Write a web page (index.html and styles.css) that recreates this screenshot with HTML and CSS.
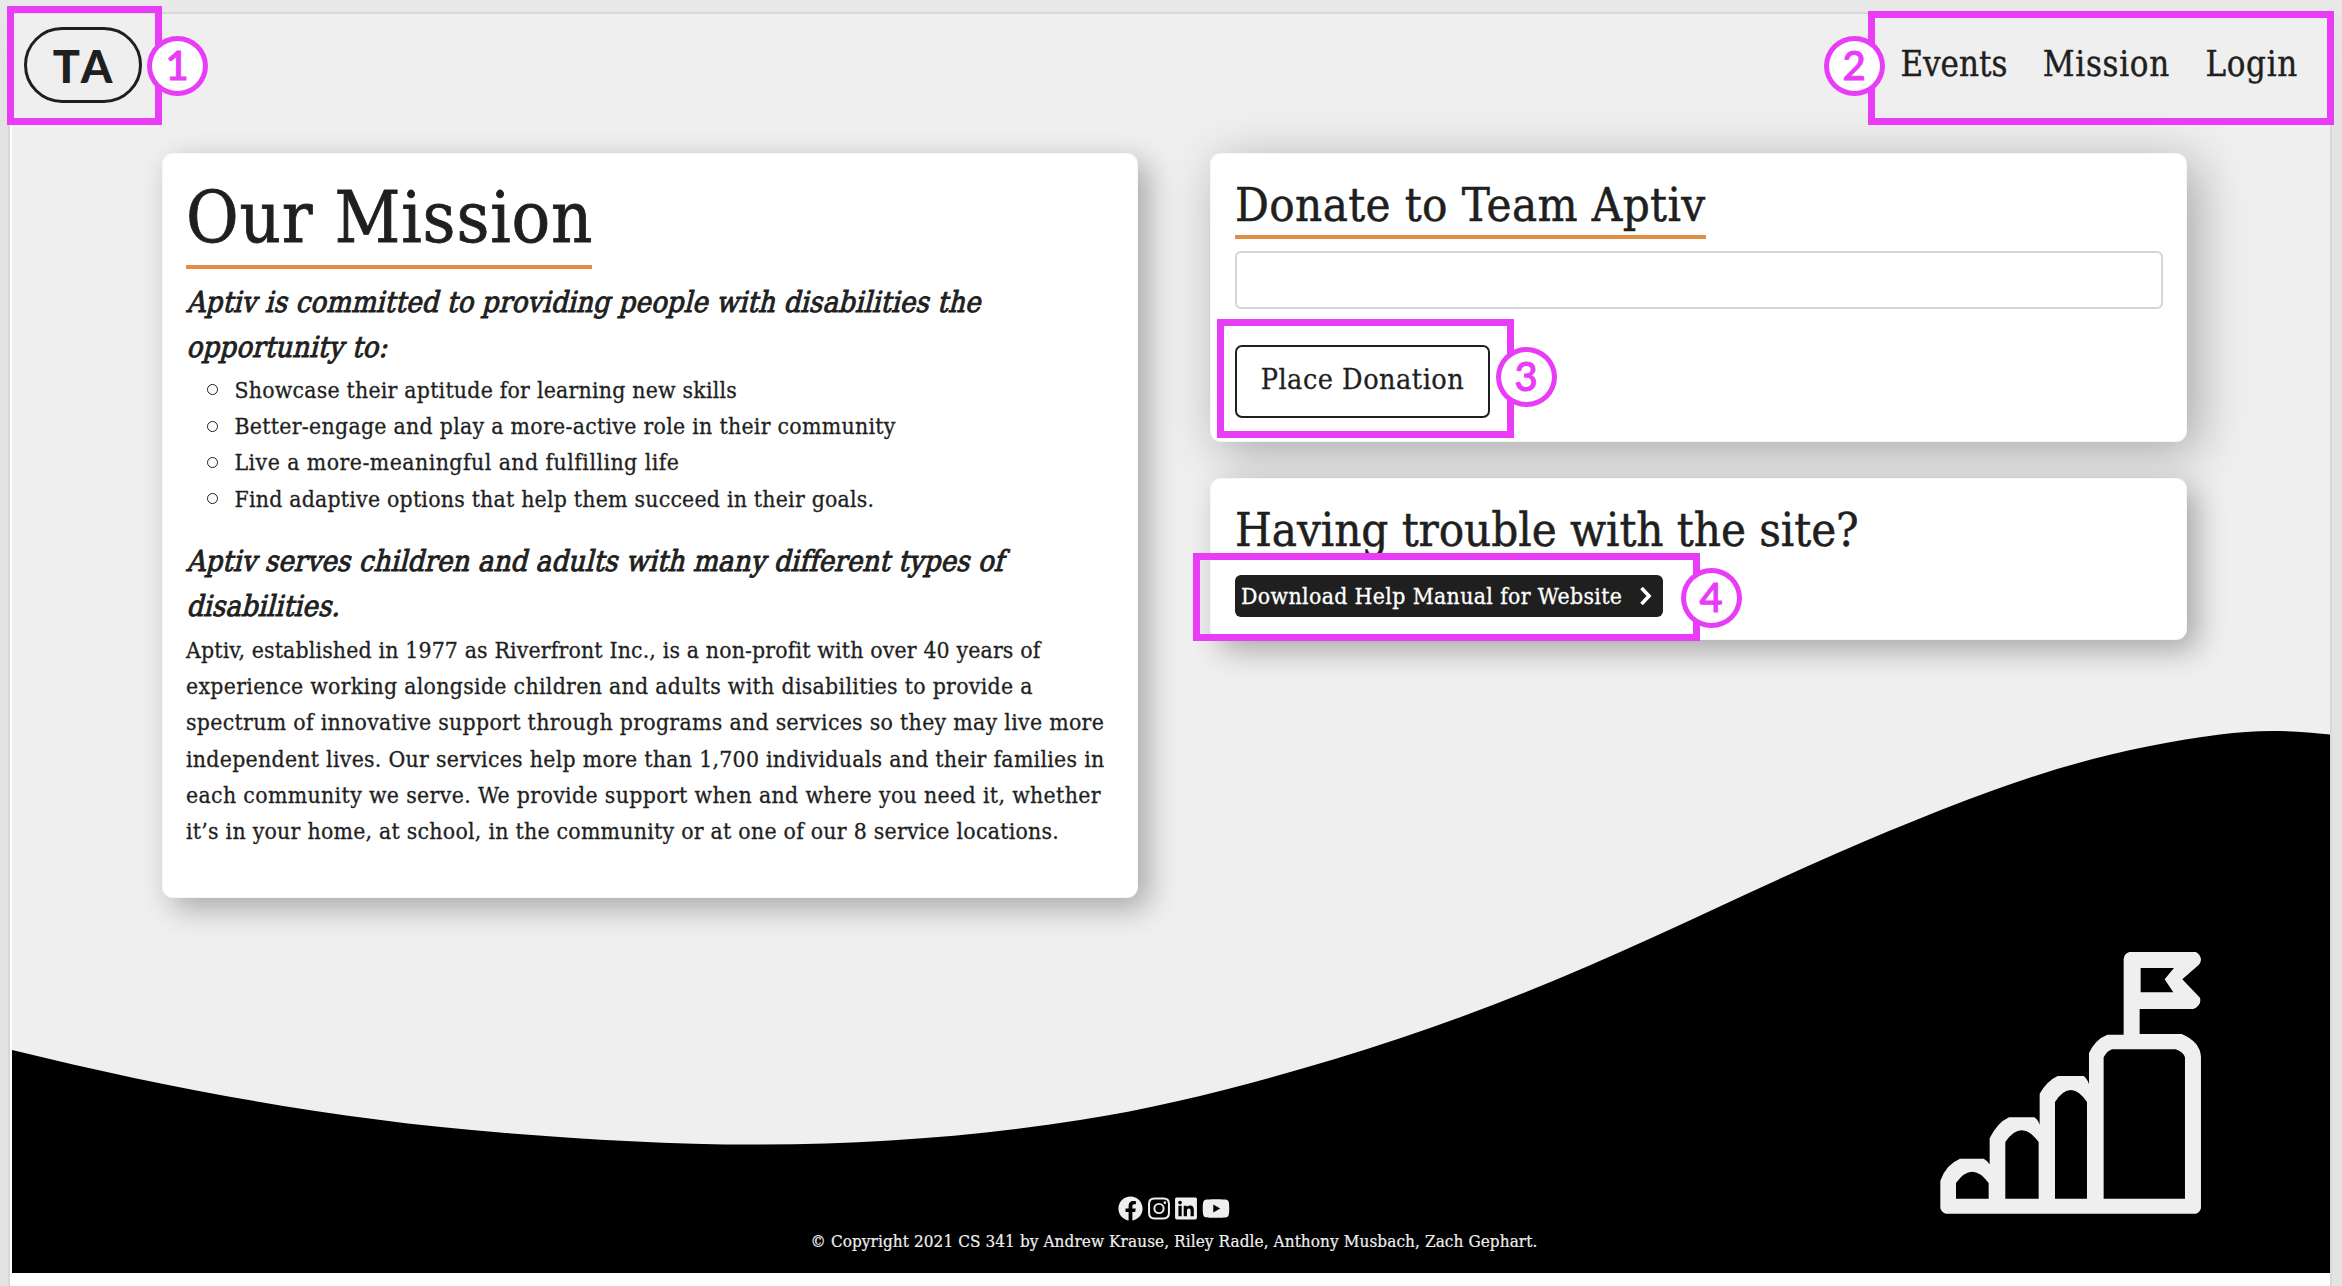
FILE: index.html
```
<!DOCTYPE html>
<html lang="en">
<head>
<meta charset="utf-8">
<title>Team Aptiv</title>
<link rel="stylesheet" href="styles.css">
</head>
<body>
<div class="window">
  <div class="page">
    <svg class="wave" viewBox="12 731 2318 542" preserveAspectRatio="none" aria-hidden="true">
      <path d="M12 1050C174.700 1089.900 337.300 1119.500 500 1132.500C585 1139.300 670 1144.500 755 1144.500C863.300 1144.500 971.700 1136.800 1080 1120C1165 1106.800 1250 1084.500 1335 1059C1398.700 1039.900 1462.300 1017.500 1526 992C1611.200 957.900 1696.300 916.800 1781.500 878C1852.300 845.800 1923.200 815.800 1994 790C2069 762.600 2145 743.900 2220 734.500C2237.300 732.300 2254.700 731 2272 731C2291.300 731 2310.700 732.600 2330 734.500V1273H12Z"/>
    </svg>

    <header class="topbar">
      <a class="logo">TA</a>
      <nav class="nav">
        <a class="nav-events">Events</a>
        <a class="nav-link">Mission</a>
        <a class="nav-link">Login</a>
      </nav>
    </header>

    <main class="content">
      <section class="card mission">
        <h1 class="title">Our Mission</h1>
        <h2 class="lead"><span class="line">Aptiv is committed to providing people with disabilities the</span> <span class="line">opportunity to:</span></h2>
        <ul class="goals">
          <li>Showcase their aptitude for learning new skills</li>
          <li>Better-engage and play a more-active role in their community</li>
          <li>Live a more-meaningful and fulfilling life</li>
          <li>Find adaptive options that help them succeed in their goals.</li>
        </ul>
        <h2 class="lead lead-second"><span class="line">Aptiv serves children and adults with many different types of</span> <span class="line">disabilities.</span></h2>
        <p class="about">
          <span>Aptiv, established in 1977 as Riverfront Inc., is a non-profit with over 40 years of</span>
          <span>experience working alongside children and adults with disabilities to provide a</span>
          <span>spectrum of innovative support through programs and services so they may live more</span>
          <span>independent lives. Our services help more than 1,700 individuals and their families in</span>
          <span>each community we serve. We provide support when and where you need it, whether</span>
          <span>it’s in your home, at school, in the community or at one of our 8 service locations.</span>
        </p>
      </section>

      <div class="side">
        <section class="card donate">
          <h2 class="heading underlined">Donate to Team Aptiv</h2>
          <input class="amount" type="text" aria-label="Amount">
          <button class="place">Place Donation</button>
        </section>
        <section class="card help">
          <h2 class="heading help-heading">Having trouble with the site?</h2>
          <a class="download">Download Help Manual for Website
            <svg class="chevron" viewBox="0 0 13 20" aria-hidden="true"><path d="M2.500 2L10 10L2.500 18"/></svg>
          </a>
        </section>
      </div>
    </main>

    <svg class="stairs" viewBox="90 66 784 786" aria-hidden="true">
      <path fill-rule="evenodd" d="M91 752Q107 704 150 686H221Q230 690 239 703V625Q262 578 297 562H373Q383 568 389 584V491Q412 452 443 438H521Q532 446 537 463V369Q556 328 592 314H641V86Q644 70 658 66H858Q872 74 873 90Q872 99 866 105L817 148L870 203Q876 226 850 237H689V312H815Q870 335 873 380V835Q869 848 858 851H108Q95 848 91 835ZM138 806H236V759Q186 691 138 759ZM286 806H386V636Q334 566 286 636ZM435 806H531V516Q482 444 435 516ZM581 806H825V382Q820 366 797 358H606Q591 363 581 382ZM692 114V187H790L764 148L792 114Z"/>
    </svg>

    <footer class="footer">
      <div class="social">
        <svg class="fb" viewBox="0 0 512 512"><path d="M504 256C504 119 393 8 256 8S8 119 8 256c0 123.780 90.690 226.380 209.250 245V327.690h-63V256h63v-54.640c0-62.150 37-96.480 93.670-96.480 27.140 0 55.520 4.840 55.520 4.840v61h-31.280c-30.800 0-40.410 19.120-40.410 38.730V256h68.780l-11 71.690h-57.780V501C413.310 482.380 504 379.780 504 256z"/></svg>
        <svg class="sq" viewBox="0 0 448 512"><path fill-rule="evenodd" d="M130 32H318Q448 32 448 162V350Q448 480 318 480H130Q0 480 0 350V162Q0 32 130 32ZM132 73Q41 73 41 164V348Q41 439 132 439H316Q407 439 407 348V164Q407 73 316 73ZM224 141a115 115 0 1 0 0 230a115 115 0 1 0 0-230ZM224 181a75 75 0 1 1 0 150a75 75 0 1 1 0-150ZM344 109a27 27 0 1 0 0 54a27 27 0 1 0 0-54Z"/></svg>
        <svg class="sq" viewBox="0 0 448 512"><path d="M416 32H31.900C14.300 32 0 46.500 0 64.300v383.400C0 465.500 14.300 480 31.900 480H416c17.600 0 32-14.500 32-32.300V64.300c0-17.800-14.400-32.300-32-32.300zM135.400 416H69V202.200h66.500V416zm-33.200-243c-21.300 0-38.500-17.300-38.500-38.500S80.900 96 102.200 96c21.200 0 38.500 17.300 38.500 38.500 0 21.300-17.200 38.500-38.500 38.500zm282.100 243h-66.400V312c0-24.800-.5-56.700-34.500-56.700-34.600 0-39.900 27-39.900 54.900V416h-66.400V202.200h63.700v29.200h.9c8.900-16.800 30.600-34.500 62.900-34.500 67.200 0 79.700 44.300 79.700 101.900V416z"/></svg>
        <svg class="yt" viewBox="0 0 576 512"><path d="M549.655 124.083c-6.281-23.650-24.787-42.276-48.284-48.597C458.781 64 288 64 288 64S117.220 64 74.629 75.486c-23.497 6.322-42.003 24.947-48.284 48.597-11.412 42.867-11.412 132.305-11.412 132.305s0 89.438 11.412 132.305c6.281 23.650 24.787 41.500 48.284 47.821C117.220 448 288 448 288 448s170.780 0 213.371-11.486c23.497-6.321 42.003-24.171 48.284-47.821 11.412-42.867 11.412-132.305 11.412-132.305s0-89.438-11.412-132.305zm-317.510 213.508V175.185l142.739 81.205-142.739 81.201z"/></svg>
      </div>
      <p class="copyright">© Copyright 2021 CS 341 by Andrew Krause, Riley Radle, Anthony Musbach, Zach Gephart.</p>
    </footer>
  </div>
</div>

<div class="mark mark-1"></div><div class="badge badge-1">1</div>
<div class="mark mark-2"></div><div class="badge badge-2">2</div>
<div class="mark mark-3"></div><div class="badge badge-3">3</div>
<div class="mark mark-4"></div><div class="badge badge-4">4</div>
</body>
</html>
```
FILE: styles.css
```
* { box-sizing: border-box; }

body {
  margin: 0;
  height: 1286px;
  overflow: hidden;
  position: relative;
  padding: 12px 10px 0 8px;
  background: linear-gradient(#e9e9e9, #e3e3e3 60px);
  color: #1f1f1f;
  font-family: "DejaVu Serif Condensed", "DejaVu Serif", serif;
  font-size: 22.800px;
}

h1, h2, p, ul { margin: 0; padding: 0; font-weight: 400; }

.window {
  height: 1300px;
  border: 2px solid #d8d8d8;
  border-bottom: 0;
  padding-left: 2px;
  background: #fff;
}

.page {
  position: relative;
  height: 1259px;
  background: #efefef;
}

.wave {
  position: absolute;
  left: 0;
  bottom: 0;
  width: 100%;
  height: 542px;
}

/* Header */
.topbar {
  position: relative;
  height: 139px;
  display: flex;
  justify-content: space-between;
  align-items: flex-start;
  padding: 13px 32px 0 12px;
}

.logo {
  width: 118px;
  height: 76px;
  border: 3px solid #1f1f1f;
  border-radius: 38px;
  font: 900 45px/72px Lato, sans-serif;
  letter-spacing: 4px;
  text-align: center;
  padding-left: 3px;
}

.nav {
  display: flex;
  gap: 35.500px;
  padding-top: 13px;
  font-size: 34.500px;
  line-height: 48px;
  -webkit-text-stroke: 0.400px #1f1f1f;
}

.nav-link { letter-spacing: 0.700px; }

/* Cards */
.content {
  position: relative;
  display: flex;
  align-items: flex-start;
  gap: 72px;
  padding: 0 143px 0 150px;
}

.card {
  background: #fff;
  border-radius: 11px;
  border: 1px solid rgba(0, 0, 0, 0.03);
}

.mission {
  width: 976px;
  height: 745px;
  padding: 22px 23px 0;
  box-shadow: 10px 10px 30px rgba(0, 0, 0, 0.3);
}

.title {
  width: 406px;
  height: 93px;
  font-size: 71.500px;
  line-height: 84px;
  letter-spacing: 0.8px;
  -webkit-text-stroke: 0.800px #1f1f1f;
  border-bottom: 4px solid #e08e45;
  white-space: nowrap;
  margin-bottom: 11px;
}

.lead {
  font-size: 29px;
  line-height: 45.400px;
  letter-spacing: 0.180px;
  -webkit-text-stroke: 0.900px #1f1f1f;
  white-space: nowrap;
}

.lead-second { letter-spacing: 0.130px; }

.line {
  display: block;
  transform: skewX(-14deg);
  transform-origin: 0 73%;
}

.goals {
  list-style: none;
  margin: 1px 0 22px;
  line-height: 36.300px;
  -webkit-text-stroke: 0.300px #1f1f1f;
}

.goals li {
  display: flex;
  align-items: center;
  gap: 17px;
  padding-left: 20.500px;
  letter-spacing: 0.224px;
  white-space: nowrap;
}

.goals li::before {
  content: "";
  width: 9px;
  height: 9px;
  border: 1.500px solid #1f1f1f;
  border-radius: 50%;
}

.goals li:nth-child(2) { letter-spacing: 0.290px; }
.goals li:nth-child(3) { letter-spacing: 0.460px; }

.about {
  margin-top: 2px;
  line-height: 36.300px;
  white-space: nowrap;
  -webkit-text-stroke: 0.300px #1f1f1f;
}

.about span { display: block; letter-spacing: 0.157px; }
.about span:nth-child(2) { letter-spacing: 0.309px; }
.about span:nth-child(3) { letter-spacing: 0.310px; }
.about span:nth-child(4) { letter-spacing: 0.282px; }
.about span:nth-child(5) { letter-spacing: 0.355px; }
.about span:nth-child(6) { letter-spacing: 0.256px; }

.side {
  display: flex;
  flex-direction: column;
  gap: 36px;
  width: 977px;
}

.donate {
  height: 289px;
  padding: 23px 23px 0 24px;
  box-shadow: 10px 10px 50px rgba(0, 0, 0, 0.3);
}

.help {
  position: relative;
  height: 162px;
  padding: 23px 23px 0 24px;
  box-shadow: 10px 10px 30px rgba(0, 0, 0, 0.3);
}

.heading {
  font-size: 47px;
  line-height: 56.400px;
  white-space: nowrap;
  -webkit-text-stroke: 0.500px #1f1f1f;
}

.underlined {
  width: 471px;
  height: 62px;
  letter-spacing: 0.360px;
  border-bottom: 4px solid #e08e45;
}

.help-heading { letter-spacing: -0.080px; }

.amount {
  display: block;
  width: 100%;
  height: 58px;
  margin-top: 12px;
  border: 2px solid #d0d5da;
  border-radius: 6px;
  background: #fff;
}

.place {
  display: block;
  width: 255px;
  height: 73px;
  margin-top: 36px;
  padding: 0 0 5px;
  border: 2px solid #1f1f1f;
  border-radius: 7px;
  background: #fff;
  color: inherit;
  font-family: inherit;
  font-size: 28.500px;
  letter-spacing: 0.500px;
  -webkit-text-stroke: 0.300px #1f1f1f;
}

.download {
  display: flex;
  align-items: center;
  gap: 17px;
  width: 428px;
  height: 42px;
  margin-top: 17px;
  padding-left: 6px;
  border-radius: 6px;
  background: #1f1f1f;
  color: #fff;
  letter-spacing: 0.365px;
  white-space: nowrap;
  -webkit-text-stroke: 0.300px #fff;
}

.chevron { width: 13px; height: 20px; fill: none; stroke: #fff; stroke-width: 3.600px; }

/* Stair illustration and footer */
.stairs {
  position: absolute;
  left: 1928px;
  top: 938px;
  width: 261.300px;
  height: 262px;
  fill: #efefef;
}

.footer {
  position: absolute;
  left: 0;
  right: 0;
  bottom: 0;
  height: 77px;
  padding-left: 6px;
  display: flex;
  flex-direction: column;
  align-items: center;
  color: #efefef;
}

.social { display: flex; gap: 5px; fill: #efefef; height: 24px; }
.social svg { height: 25px; }
.fb { width: 25px; }
.sq { width: 22px; }
.yt { width: 28px; }

.copyright {
  margin-top: 8px;
  font-size: 17px;
  line-height: 26px;
  letter-spacing: 0.090px;
  white-space: nowrap;
  -webkit-text-stroke: 0.200px #efefef;
}

/* Numbered callouts */
.mark { position: absolute; border: 7px solid #e83cf7; }
.mark-1 { left: 7px; top: 6px; width: 155px; height: 119px; }
.mark-2 { left: 1868px; top: 11px; width: 466px; height: 114px; }
.mark-3 { left: 1217px; top: 319px; width: 297px; height: 119px; }
.mark-4 { left: 1193px; top: 553px; width: 507px; height: 88px; }

.badge {
  position: absolute;
  width: 61px;
  height: 60px;
  border: 5px solid #e83cf7;
  border-radius: 50%;
  background: #fff;
  color: #e83cf7;
  font: 500 40px/48px Lato, sans-serif;
  -webkit-text-stroke: 1px #e83cf7;
  text-align: center;
  padding-right: 1px;
}
.badge-1 { left: 147px; top: 36px; }
.badge-2 { left: 1824px; top: 36px; }
.badge-3 { left: 1496px; top: 347px; }
.badge-4 { left: 1681px; top: 568px; }
```
